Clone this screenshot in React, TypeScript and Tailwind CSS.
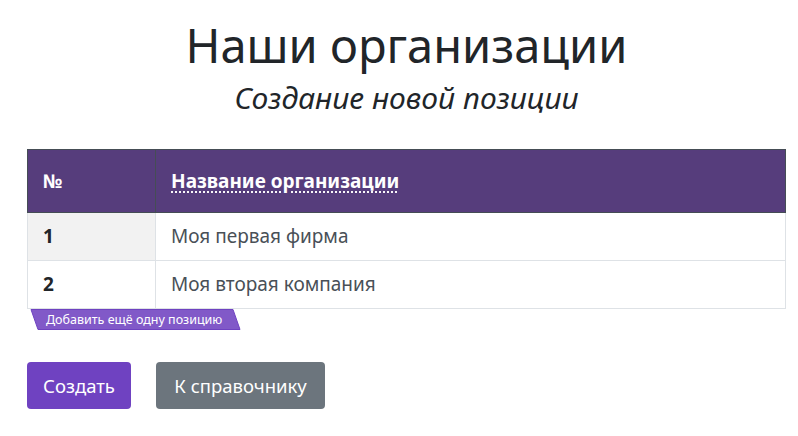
export default function App() {
  return (
    <div className="min-h-[436px] bg-white pl-[27px] pr-[12px] pt-[13px] text-[#212529]" style={{ fontFamily: '"Noto Sans", sans-serif' }}>
      <h1 className="text-center text-[47px] leading-[64px] font-normal">Наши организации</h1>
      <h2 className="mt-[2px] text-center text-[30px] leading-[38px] italic font-normal">Создание новой позиции</h2>

      <table className="mt-[32px] w-full border-collapse text-[19px]">
        <thead>
          <tr className="h-[63px] bg-[#563d7c] text-white">
            <th className="w-[128px] border border-[#454d55] pl-[15px] text-left font-bold">№</th>
            <th className="border border-[#454d55] pl-[15px] text-left font-bold">
              <span className="underline decoration-dotted underline-offset-4">Название организации</span>
            </th>
          </tr>
        </thead>
        <tbody>
          <tr className="h-[48px]">
            <td className="border border-[#dee2e6] bg-[#f2f2f2] pl-[15px] font-bold">1</td>
            <td className="border border-[#dee2e6] pl-[15px] text-[#495057]">Моя первая фирма</td>
          </tr>
          <tr className="h-[48px]">
            <td className="border border-[#dee2e6] pl-[15px] font-bold">2</td>
            <td className="border border-[#dee2e6] pl-[15px] text-[#495057]">Моя вторая компания</td>
          </tr>
        </tbody>
      </table>

      <div className="relative ml-[3px] h-[21px] w-[212px]">
        <svg className="absolute inset-0" width="212" height="21" viewBox="0 0 212 21">
          <polygon points="1,0.5 203,0.5 210,20.5 8,20.5" fill="#8159c8" stroke="#6f42c1" />
        </svg>
        <span className="relative block pl-[16px] text-[12.5px] leading-[21px] text-white">Добавить ещё одну позицию</span>
      </div>

      <div className="mt-[32px] flex gap-[25px]">
        <button className="h-[47px] w-[104px] rounded-[4px] bg-[#6f42c1] text-[18.5px] text-white">Создать</button>
        <button className="h-[47px] w-[169px] rounded-[4px] bg-[#6c757d] text-[18.5px] text-white">К справочнику</button>
      </div>
    </div>
  );
}
